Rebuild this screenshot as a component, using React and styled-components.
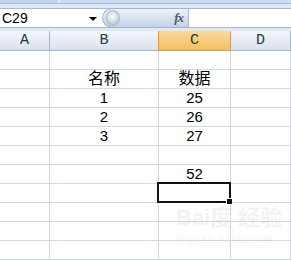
import React from "react";
import styled, { createGlobalStyle } from "styled-components";

const GlobalStyle = createGlobalStyle`
  html, body {
    margin: 0;
    padding: 0;
    background: #ffffff;
    overflow: hidden;
  }
  body {
    font-family: "Liberation Sans", "Noto Sans CJK SC", sans-serif;
  }
`;

const Page = styled.div`
  width: 291px;
  height: 261px;
  position: relative;
  overflow: hidden;
  background: #ffffff;
`;

const RibbonEdge = styled.div`
  height: 3px;
  background: #c8dbf1;
  display: flex;
`;

const RibbonTab = styled.div`
  width: ${(p) => p.w}px;
  border-right: 1px solid #e6eefa;
  border-left: ${(p) => (p.first ? "none" : "1px solid #e6eefa")};
  background: ${(p) => (p.first ? "#bfd4ee" : "#c8dbf1")};
`;

const BarFrame = styled.div`
  border-top: 1px solid #a3bcd9;
  background: #dfe9f5;
  padding: 4px 0 3px 0;
`;

const FormulaBar = styled.div`
  display: flex;
  height: 18px;
  border-top: 1px solid #aab9cc;
  border-bottom: 1px solid #aab9cc;
  background: #ffffff;
`;

const NameBox = styled.div`
  width: 102px;
  display: flex;
  align-items: center;
  justify-content: space-between;
  padding: 0 5px 0 2px;
  box-sizing: border-box;
  font-family: "Liberation Sans", sans-serif;
  font-size: 14px;
  color: #000000;
`;

const DropArrow = styled.span`
  width: 0;
  height: 0;
  border-left: 4px solid transparent;
  border-right: 4px solid transparent;
  border-top: 4px solid #000000;
  margin-top: 1px;
`;

const Pill = styled.div`
  width: 77px;
  margin-top: -1px;
  margin-bottom: -1px;
  border: 1px solid #9fb3cc;
  border-right: none;
  border-radius: 10px 0 0 10px;
  background: linear-gradient(#eef3fa, #d4e0ef 55%, #c4d3e8);
  display: flex;
  align-items: center;
  justify-content: space-between;
  padding: 0 5px 0 3px;
`;

const Knob = styled.span`
  width: 12px;
  height: 14px;
  border-radius: 50%;
  background: radial-gradient(circle at 45% 40%, #ffffff, #d9dde3 45%, #a9b1bc);
  border: 1px solid #b3bdca;
`;

const Fx = styled.span`
  font-family: "Liberation Serif", serif;
  font-style: italic;
  font-weight: bold;
  font-size: 13px;
  color: #4f5a68;
  letter-spacing: -1px;
`;

const FormulaInput = styled.div`
  flex: 1;
  border-left: 1px solid #aab9cc;
  background: #ffffff;
`;

const Sheet = styled.div`
  display: grid;
  grid-template-columns: 50px 109px 72px 1fr;
  grid-auto-rows: 19px;
  grid-template-rows: 20px;
`;

const ColHead = styled.div`
  display: flex;
  align-items: center;
  justify-content: center;
  font-family: "Liberation Mono", monospace;
  font-size: 15px;
  color: #213b3a;
  box-sizing: border-box;
  border-bottom: 1px solid ${(p) => (p.active ? "#f29436" : "#9eb6ce")};
  border-right: 1px solid ${(p) => (p.active ? "#f29436" : "#9eb6ce")};
  border-left: ${(p) => (p.active ? "1px solid #f29436" : "none")};
  margin-left: ${(p) => (p.active ? "-1px" : "0")};
  background: ${(p) =>
    p.active
      ? "linear-gradient(#f9d99f, #f1c15f)"
      : "linear-gradient(#f3f6fb, #e4eaf3 60%, #dae2ee)"};
`;

const Cell = styled.div`
  position: relative;
  box-sizing: border-box;
  border-right: 1px solid #d0d7e5;
  border-bottom: 1px solid #d0d7e5;
  display: flex;
  align-items: flex-end;
  justify-content: center;
  padding-bottom: 1px;
  font-family: "Liberation Sans", "Noto Sans CJK SC", sans-serif;
  font-size: ${(p) => (p.cjk ? "16px" : "15px")};
  line-height: 16px;
  color: #000000;
`;

const Selection = styled.div`
  position: absolute;
  left: -2px;
  top: -2px;
  right: -1px;
  bottom: -1px;
  border: 2px solid #111111;
  z-index: 2;
`;

const FillHandle = styled.div`
  position: absolute;
  right: -4px;
  bottom: -4px;
  width: 5px;
  height: 5px;
  background: #111111;
  border: 1px solid #ffffff;
`;

const Watermark = styled.div`
  position: absolute;
  left: 176px;
  top: 206px;
  color: rgba(190, 190, 190, 0.2);
  font-family: "Liberation Sans", "Noto Sans CJK SC", sans-serif;
  pointer-events: none;
  z-index: 3;
`;

const MarkTitle = styled.div`
  font-size: 22px;
  font-weight: bold;
  line-height: 24px;
`;

const MarkUrl = styled.div`
  font-size: 11px;
  line-height: 14px;
  margin-top: 2px;
  letter-spacing: 0.5px;
`;

const columns = ["A", "B", "C", "D"];

const rows = [
  ["", "", "", ""],
  ["", "名称", "数据", ""],
  ["", "1", "25", ""],
  ["", "2", "26", ""],
  ["", "3", "27", ""],
  ["", "", "", ""],
  ["", "", "52", ""],
  ["", "", "", ""],
  ["", "", "", ""],
  ["", "", "", ""],
  ["", "", "", ""],
];

const selected = { row: 7, col: 2 };

function App() {
  return (
    <Page>
      <GlobalStyle />
      <RibbonEdge>
        <RibbonTab first w={58} />
        <RibbonTab w={229} />
      </RibbonEdge>
      <BarFrame>
        <FormulaBar>
          <NameBox>
            C29
            <DropArrow />
          </NameBox>
          <Pill>
            <Knob />
            <Fx>fx</Fx>
          </Pill>
          <FormulaInput />
        </FormulaBar>
      </BarFrame>
      <Sheet>
        {columns.map((c) => (
          <ColHead key={c} active={c === "C"}>
            {c}
          </ColHead>
        ))}
        {rows.map((r, ri) =>
          r.map((v, ci) => (
            <Cell key={ri + "-" + ci} cjk={/[^\x00-\x7f]/.test(v)}>
              {v}
              {ri === selected.row && ci === selected.col && (
                <Selection>
                  <FillHandle />
                </Selection>
              )}
            </Cell>
          ))
        )}
      </Sheet>
      <Watermark>
        <MarkTitle>Bai度 经验</MarkTitle>
        <MarkUrl>jingyan.baidu.com</MarkUrl>
      </Watermark>
    </Page>
  );
}

export default App;
